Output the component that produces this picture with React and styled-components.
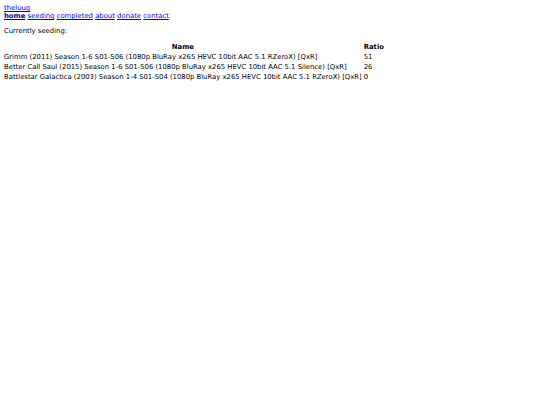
import React from 'react';
import styled, {createGlobalStyle} from "styled-components";

const GlobalStyle = createGlobalStyle`
  body {
    margin: 4px;
    font-family: "DejaVu Sans", Verdana, sans-serif;
    font-size: 6.85px;
    line-height: 8px;
    background: #fff;
    color: #000;
  }
  a { color: #0000ee; }
`;

const Header = styled.div`
  margin-bottom: 7px;
`;

const NavLink = styled.a`
  font-weight: ${props => props.active ? 'bold' : 'normal'};
  color: ${props => props.active ? '#000099' : '#0000ee'};
`;

const Intro = styled.p`
  margin: 0 0 7px;
`;

const Table = styled.table`
  border-spacing: 0;
  font-size: 6.85px;
  th, td { padding: 1px 0; line-height: 8px; }
  th { font-weight: bold; }
  td + td, th + th { padding-left: 2px; text-align: left; }
`;

const torrents = [
    {name: 'Grimm (2011) Season 1-6 S01-S06 (1080p BluRay x265 HEVC 10bit AAC 5.1 RZeroX) [QxR]', ratio: 51},
    {name: 'Better Call Saul (2015) Season 1-6 S01-S06 (1080p BluRay x265 HEVC 10bit AAC 5.1 Silence) [QxR]', ratio: 26},
    {name: 'Battlestar Galactica (2003) Season 1-4 S01-S04 (1080p BluRay x265 HEVC 10bit AAC 5.1 RZeroX) [QxR]', ratio: 0},
];

const App = () => {
    const nav = ['home', 'seeding', 'completed', 'about', 'donate', 'contact'];
    return (
        <>
            <GlobalStyle/>
            <Header>
                <div><a href="#">theluug</a></div>
                <div>
                    {nav.map((item, index) => (
                        <React.Fragment key={item}>
                            <NavLink href="#" active={index === 0 ? 1 : 0}>{item}</NavLink>{' '}
                        </React.Fragment>
                    ))}
                </div>
            </Header>
            <Intro>Currently seeding:</Intro>
            <Table>
                <thead>
                <tr><th>Name</th><th>Ratio</th></tr>
                </thead>
                <tbody>
                {torrents.map(t => (
                    <tr key={t.name}><td>{t.name}</td><td>{t.ratio}</td></tr>
                ))}
                </tbody>
            </Table>
        </>
    );
};

export default App;
